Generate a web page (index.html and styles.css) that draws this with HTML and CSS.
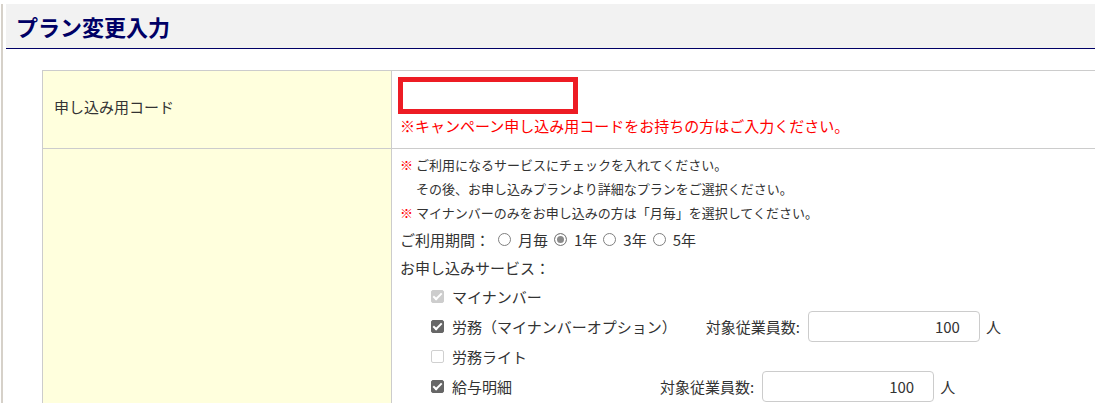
FILE: index.html
```html
<!DOCTYPE html>
<html lang="ja">
<head>
    <meta charset="UTF-8">
    <title>プラン変更入力</title>
    <link rel="stylesheet" href="styles.css">
</head>
<body>
    <div class="page">
        <div class="page-head">
            <h1>プラン変更入力</h1>
        </div>

        <table class="form-table">
            <tr class="row-code">
                <th class="label label-code">申し込み用コード</th>
                <td class="field">
                    <div class="code-box"></div>
                    <p class="code-note">※キャンペーン申し込み用コードをお持ちの方はご入力ください。</p>
                </td>
            </tr>
            <tr>
                <th class="label"></th>
                <td class="field field-plan">
                    <p class="note"><span class="mark">※</span> ご利用になるサービスにチェックを入れてください。</p>
                    <p class="note note-indent">その後、お申し込みプランより詳細なプランをご選択ください。</p>
                    <p class="note"><span class="mark">※</span> マイナンバーのみをお申し込みの方は「月毎」を選択してください。</p>

                    <div class="period">
                        <span class="period-label">ご利用期間：</span>
                        <label><input type="radio" name="period" class="radio">月毎</label>
                        <label><input type="radio" name="period" class="radio" checked>1年</label>
                        <label><input type="radio" name="period" class="radio">3年</label>
                        <label><input type="radio" name="period" class="radio">5年</label>
                    </div>

                    <div class="svc-head">お申し込みサービス：</div>

                    <ul class="services">
                        <li class="service">
                            <input type="checkbox" class="check" checked disabled>
                            <span class="svc-name">マイナンバー</span>
                        </li>
                        <li class="service">
                            <input type="checkbox" class="check" checked>
                            <span class="svc-name">労務（マイナンバーオプション）</span>
                            <span class="count count-near">対象従業員数:</span>
                            <input type="text" class="num" value="100">
                            <span class="unit">人</span>
                        </li>
                        <li class="service">
                            <input type="checkbox" class="check">
                            <span class="svc-name">労務ライト</span>
                        </li>
                        <li class="service">
                            <input type="checkbox" class="check" checked>
                            <span class="svc-name">給与明細</span>
                            <span class="count count-far">対象従業員数:</span>
                            <input type="text" class="num" value="100">
                            <span class="unit">人</span>
                        </li>
                    </ul>
                </td>
            </tr>
        </table>
    </div>
</body>
</html>
```

FILE: styles.css
```css
html, body {
    margin: 0;
    overflow: hidden;
    background: #fff;
}

body {
    font-family: "Noto Sans CJK JP", "Noto Sans", sans-serif;
    color: #333;
    font-size: 15px;
}

.page {
    margin-left: 1px;
    border-left: 2px solid #d6d1c9;
    min-height: 420px;
    width: 1200px;
}

.page-head {
    margin: 4px 0 0 3px;
    height: 44px;
    background: #f2f2f2;
    border-bottom: 1px solid #000066;
}

.page-head h1 {
    margin: 0;
    padding-left: 10px;
    font-size: 22px;
    line-height: 44px;
    font-weight: bold;
    color: #000066;
}

/* form table */
.form-table {
    margin: 21px 0 0 39px;
    width: 1100px;
    border-collapse: collapse;
}

.form-table th,
.form-table td {
    border: 1px solid #ccc;
}

.label {
    width: 337px;
    padding: 0 0 0 11px;
    background: #ffffdd;
    text-align: left;
    font-weight: normal;
    vertical-align: middle;
}

.label-code {
    padding-bottom: 6px;
}

.field {
    padding: 6px 8px 10px 6px;
    vertical-align: top;
}

.code-box {
    width: 170px;
    height: 27px;
    border: 5px solid #ed1c24;
}

.code-note {
    margin: 0;
    padding-left: 2px;
    line-height: 24px;
    color: #f00;
}

/* plan cell */
.field-plan {
    padding-top: 4px;
    padding-left: 8px;
}

.note {
    margin: 0;
    font-size: 13px;
    line-height: 24px;
}

.note-indent {
    padding-left: 16px;
}

.mark {
    color: #f00;
    font-weight: bold;
}

.period {
    display: flex;
    align-items: center;
    height: 28px;
}

.period label {
    display: flex;
    align-items: center;
    margin-right: 6px;
}

.period-label {
    margin-right: 8px;
}

.radio {
    appearance: none;
    width: 13px;
    height: 13px;
    margin: 0 7px 0 0;
    border: 1px solid #808080;
    border-radius: 50%;
    background: #fff;
}

.radio:checked {
    background: #8a8a8a;
    box-shadow: inset 0 0 0 2px #fff;
}

.svc-head {
    margin-top: 1px;
    line-height: 28px;
}

.services {
    list-style: none;
    margin: 0;
    padding: 0 0 0 31px;
}

.service {
    display: flex;
    align-items: center;
    min-height: 29px;
}

.check {
    appearance: none;
    position: relative;
    width: 13px;
    height: 13px;
    margin: 0 8px 0 0;
    border: 1px solid #d0d0d0;
    border-radius: 2px;
    background: #fff;
}

.check:checked {
    background: #666;
    border-color: #666;
}

.check:checked::after {
    content: "";
    position: absolute;
    left: 3px;
    top: 0;
    width: 3px;
    height: 7px;
    border: solid #fff;
    border-width: 0 2px 2px 0;
    transform: rotate(45deg);
}

.check:disabled:checked {
    background: #cdcdcd;
    border-color: #cdcdcd;
}

.count-near {
    margin-left: 29px;
}

.count-far {
    margin-left: 148px;
}

.num {
    box-sizing: border-box;
    width: 172px;
    height: 31px;
    margin-left: 8px;
    padding: 0 19px 0 8px;
    border: 1px solid #ccc;
    border-radius: 4px;
    font: inherit;
    color: #333;
    text-align: right;
}

.unit {
    margin-left: 6px;
}
```
